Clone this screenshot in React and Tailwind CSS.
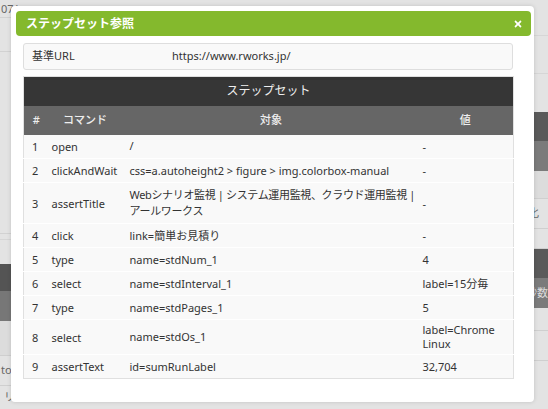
import React from "react";
import { FaTimes } from "react-icons/fa";

const steps = [
  { no: 1, cmd: "open", target: "/", value: "-" },
  { no: 2, cmd: "clickAndWait", target: "css=a.autoheight2 > figure > img.colorbox-manual", value: "-" },
  {
    no: 3,
    cmd: "assertTitle",
    target: (
      <>
        Webシナリオ監視 | システム運用監視、クラウド運用監視 |
        <br />
        アールワークス
      </>
    ),
    value: "-",
    tall: true,
  },
  { no: 4, cmd: "click", target: "link=簡単お見積り", value: "-" },
  { no: 5, cmd: "type", target: "name=stdNum_1", value: "4" },
  { no: 6, cmd: "select", target: "name=stdInterval_1", value: "label=15分毎" },
  { no: 7, cmd: "type", target: "name=stdPages_1", value: "5" },
  {
    no: 8,
    cmd: "select",
    target: "name=stdOs_1",
    value: (
      <>
        label=Chrome
        <br />
        Linux
      </>
    ),
    tight: true,
  },
  { no: 9, cmd: "assertText", target: "id=sumRunLabel", value: "32,704" },
];

const fontStack = { fontFamily: '"Noto Sans", "Noto Sans CJK JP", sans-serif' };

function LeftPage() {
  return (
    <div className="w-[270px] flex flex-col text-[11px] text-[#666]">
      <div className="h-[18px] border-b border-[#d2d2d2] flex items-end pl-[1px] leading-[16px]">07/</div>
      <div className="h-[35px] border-b border-[#d2d2d2]" />
      <div className="h-[184px] border-b border-[#d2d2d2]" />
      <div className="h-[25px] border-t border-[#d6d6d6] mt-[5px]" />
      <div className="h-[28px] bg-[#545454]" />
      <div className="h-[30px] bg-[#777]" />
      <div className="h-[35px] bg-[#dcdcdc] border-b border-[#cfcfcf]" />
      <div className="h-[31px] border-b border-[#cfcfcf] flex items-center pl-[1px]">to</div>
      <div className="h-[23px] flex items-center pl-[4px]">リフ</div>
    </div>
  );
}

function RightPage() {
  return (
    <div className="flex-1 flex flex-col text-[11px] text-[#666]">
      <div className="h-[36px] border-b border-[#d6d6d6]" />
      <div className="h-[38px] border-b border-[#d6d6d6]" />
      <div className="h-[38px]" />
      <div className="h-[29px] bg-[#5a5a5a]" />
      <div className="h-[30px] bg-[#7b7b7b]" />
      <div className="h-[28px] bg-[#dcdcdc] border-b border-[#cfcfcf]" />
      <div className="h-[30px] border-b border-[#cfcfcf] flex items-center pl-[262px]">化</div>
      <div className="h-[20px] border-b border-[#cfcfcf]" />
      <div className="h-[29px] bg-[#5a5a5a]" />
      <div className="h-[30px] bg-[#7b7b7b] flex items-center pl-[260px] text-[#ddd] whitespace-nowrap">秒数</div>
      <div className="h-[23px] border-b border-[#cfcfcf]" />
      <div className="h-[30px] border-b border-[#cfcfcf]" />
    </div>
  );
}

function StepTable() {
  return (
    <table className="w-[490px] table-fixed border-collapse border border-[#e0e0e0] text-[11px] text-[#333]">
      <colgroup>
        <col className="w-[22px]" />
        <col className="w-[79px]" />
        <col className="w-[293px]" />
        <col className="w-[96px]" />
      </colgroup>
      <thead>
        <tr className="bg-[#363636] text-[#eee]">
          <th colSpan={4} className="h-[29px] text-[12px] font-normal text-center">ステップセット</th>
        </tr>
        <tr className="bg-[#666] text-[#eee]">
          <th className="h-[29px] font-medium text-center pl-[3px]">#</th>
          <th className="font-medium text-center">コマンド</th>
          <th className="font-medium text-center">対象</th>
          <th className="font-medium text-center">値</th>
        </tr>
      </thead>
      <tbody>
        {steps.map((s) => (
          <tr
            key={s.no}
            className={`bg-[#f9f9f9] border-b border-white last:border-b-0 ${
              s.tall ? "h-[41px]" : s.tight ? "h-[35px]" : "h-[24px]"
            }`}
          >
            <td className="py-0 pl-[8px] leading-[15px] align-middle">{s.no}</td>
            <td className="py-0 pl-[6px] leading-[15px] align-middle">{s.cmd}</td>
            <td
              className={`py-0 pl-[5px] pr-[4px] leading-[16px] align-middle ${
                s.tall ? "whitespace-nowrap tracking-[-0.35px]" : ""
              }`}
            >
              {s.target}
            </td>
            <td className={`py-0 pl-[5px] pr-[4px] align-middle ${s.tight ? "leading-[14px]" : "leading-[15px]"}`}>
              {s.value}
            </td>
          </tr>
        ))}
      </tbody>
    </table>
  );
}

export default function App() {
  return (
    <div className="relative w-[548px] h-[409px] overflow-hidden bg-[#e3e3e3]" style={fontStack}>
      <div className="flex h-full">
        <LeftPage />
        <RightPage />
      </div>

      <div className="absolute left-[11px] top-[6px] w-[523px] h-[396px] bg-white rounded-[4px] shadow-[0_0_4px_rgba(0,0,0,0.15)] pt-[5px] pl-[5px] pr-[3px]">
        <div className="h-[25px] rounded-[4px] bg-[#84b92d] flex items-center justify-between pl-[10px] pr-[8px]">
          <span className="text-white text-[12px] font-bold">ステップセット参照</span>
          <FaTimes className="text-white w-[10px] h-[10px]" />
        </div>

        <div className="pl-[7px] pt-[7px]">
          <div className="w-[490px] h-[27px] border border-[#dedede] bg-[#f9f9f9] rounded-[3px] flex items-center text-[11px] text-[#333]">
            <span className="w-[148px] pl-[8px]">基準URL</span>
            <span>https://www.rworks.jp/</span>
          </div>
          <div className="mt-[6px]">
            <StepTable />
          </div>
        </div>
      </div>
    </div>
  );
}
